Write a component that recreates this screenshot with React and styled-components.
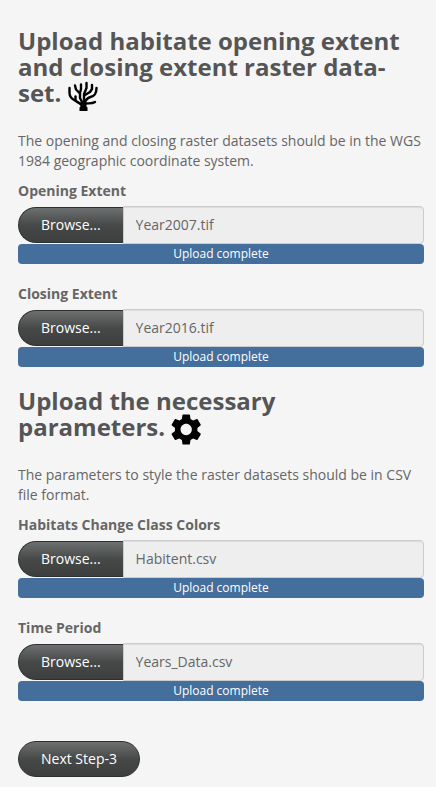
import React, { useId } from "react";
import styled, { createGlobalStyle } from "styled-components";

const Global = createGlobalStyle`
  * { box-sizing: border-box; }
  body { margin: 0; background: #f5f5f5; color: #666; font: 14px/20px "Open Sans", sans-serif; }
`;
const Panel = styled.form`padding: 28px 12px 10px 18px;`;
const Section = styled.section`margin-bottom: 21px;`;
const Title = styled.h1`
  margin: 0 0 20px; font-size: 24px; line-height: 26px; font-weight: 700; color: #555;
`;
const Icon = styled.svg`
  width: ${(p) => p.$size}px; height: ${(p) => p.$size}px; vertical-align: middle;
`;
const Note = styled.p`margin: 0 0 10px;`;
const Field = styled.div`margin-bottom: 20px;`;
const Label = styled.label`display: block; margin-bottom: 5px; font-weight: 700;`;
const Group = styled.div`display: flex; align-items: center;`;
const Button = styled.button`
  flex: none; height: 36px; padding: 0 22px; border: 1px solid #2f3131;
  border-right-width: ${(p) => (p.$joined ? "0" : "1px")};
  border-radius: ${(p) => (p.$joined ? "18px 0 0 18px" : "18px")};
  background: linear-gradient(#6d7070, #474949 50%, #3d3f3f); color: #fff; font: inherit;
`;
const FileName = styled.input`
  flex: 1; min-width: 0; height: 38px; padding: 0 12px; border: 1px solid #ccc;
  border-radius: 0 4px 4px 0; background: #eee; color: #666; font: inherit;
  box-shadow: inset 0 1px 1px rgba(0, 0, 0, 0.075);
`;
const Progress = styled.div`
  height: 20px; border-radius: 4px; background: #446e9b; color: #fff;
  font-size: 12px; line-height: 20px; text-align: center;
`;
const Actions = styled.div`padding-top: 19px;`;

function Coral() {
  return (
    <Icon $size={30} viewBox="0 -1 30 30" aria-hidden="true">
      <g fill="none" stroke="#000" strokeWidth="2.4" strokeLinecap="round" strokeLinejoin="round">
        <path d="M1.500 6v5c0 6 5 6.500 11 11" />
        <path d="M7.500 14.500v3" />
        <path d="M7 3.500l1 4 4 4v4.500l3 6" />
        <path d="M13 2.500v4.500l-1 4" />
        <path d="M18.500 1v5l-2.500 6v9" />
        <path d="M24 3v4l-2 3-5 3" />
        <path d="M28.500 6c0 6-2 8-6 9-3 1-5 3-6 6" />
        <path d="M27 20c-3 2-6 1-10 1.500" />
      </g>
      <path d="M11.500 20.500h7v4l1 1v3.500h-8v-3.500l1-1z" />
    </Icon>
  );
}

function Gear() {
  return (
    <Icon $size={31} viewBox="2.300 2.100 19.800 19.800" aria-hidden="true">
      <path d="M19.140 12.940c.04-.3.06-.61.06-.94 0-.32-.02-.64-.07-.94l2.030-1.580c.18-.14.23-.41.12-.61l-1.920-3.320c-.12-.22-.37-.29-.59-.22l-2.390.96c-.5-.38-1.030-.7-1.620-.94l-.36-2.540c-.04-.24-.24-.41-.48-.41h-3.840c-.24 0-.43.17-.47.41l-.36 2.540c-.59.24-1.130.57-1.620.94l-2.390-.96c-.22-.08-.47 0-.59.22L2.740 8.870c-.12.21-.08.47.12.61l2.030 1.580c-.05.3-.09.63-.09.94s.02.64.07.94l-2.030 1.580c-.18.14-.23.41-.12.61l1.920 3.320c.12.22.37.29.59.22l2.390-.96c.5.38 1.030.7 1.620.94l.36 2.540c.05.24.24.41.48.41h3.840c.24 0 .44-.17.47-.41l.36-2.540c.59-.24 1.130-.56 1.620-.94l2.390.96c.22.08.47 0 .59-.22l1.920-3.320c.12-.22.07-.47-.12-.61l-2.010-1.580zM12 15.600c-1.980 0-3.600-1.620-3.600-3.600s1.620-3.600 3.600-3.600 3.600 1.620 3.600 3.600-1.620 3.600-3.600 3.600z" />
    </Icon>
  );
}

function Upload({ label, file }) {
  const id = useId();
  return (
    <Field>
      <Label htmlFor={id}>{label}</Label>
      <Group><Button type="button" $joined>Browse...</Button><FileName id={id} readOnly value={file} /></Group>
      <Progress>Upload complete</Progress>
    </Field>
  );
}

export default function App() {
  return (
    <><Global /><Panel>
      <Section>
        <Title>Upload habitate opening extent and closing extent raster data-set. <Coral /></Title>
        <Note>The opening and closing raster datasets should be in the WGS 1984 geographic coordinate system.</Note>
        <Upload label="Opening Extent" file="Year2007.tif" />
        <Upload label="Closing Extent" file="Year2016.tif" />
      </Section>
      <Section>
        <Title>Upload the necessary parameters. <Gear /></Title>
        <Note>The parameters to style the raster datasets should be in CSV file format.</Note>
        <Upload label="Habitats Change Class Colors" file="Habitent.csv" />
        <Upload label="Time Period" file="Years_Data.csv" />
      </Section>
      <Actions><Button type="button">Next Step-3</Button></Actions>
    </Panel></>
  );
}
